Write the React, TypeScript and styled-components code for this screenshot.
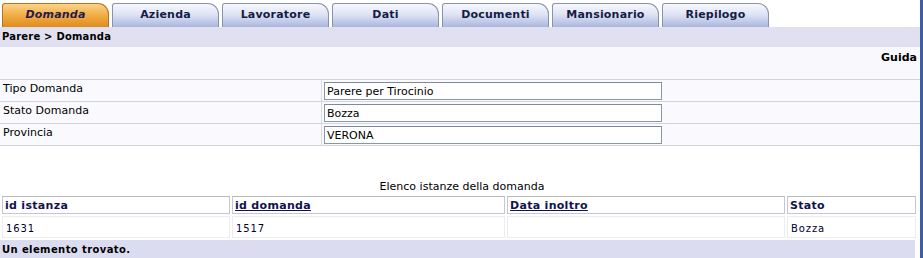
import React, { FunctionComponent } from 'react';
import styled, { createGlobalStyle } from 'styled-components';

const GlobalStyle = createGlobalStyle`
    html, body {
        margin: 0;
        padding: 0;
        background: #ffffff;
    }
    body {
        font-family: 'DejaVu Sans', Verdana, sans-serif;
        font-size: 11px;
        color: #000000;
    }
`;

const Frame = styled.div`
    display: flex;
    flex-direction: column;
    width: 920px;
    height: 258px;
    border-right: 3px solid #3d5f9e;
    background: #ffffff;
    overflow: hidden;
`;

const TabBar = styled.div`
    display: flex;
    flex-direction: row;
    align-items: flex-end;
    height: 27px;
    padding-left: 2px;
    gap: 3px;
`;

const Tab = styled.div<{ $active?: boolean }>`
    display: flex;
    align-items: center;
    justify-content: center;
    box-sizing: border-box;
    width: 107px;
    height: 24px;
    border: 1px solid ${(p) => (p.$active ? '#b07426' : '#8a93ae')};
    border-bottom: none;
    border-radius: 3px 11px 0 0;
    background: ${(p) =>
        p.$active
            ? 'linear-gradient(to bottom, #fbd48a 0%, #f2b04a 45%, #e08c1c 100%)'
            : 'linear-gradient(to bottom, #f6f8fd 0%, #dfe4f4 45%, #aab6de 100%)'};
    color: ${(p) => (p.$active ? '#241a4e' : '#141c46')};
    font-size: 11px;
    font-weight: bold;
    font-style: ${(p) => (p.$active ? 'italic' : 'normal')};
    letter-spacing: 0.2px;
    padding-bottom: 1px;
`;

const Breadcrumb = styled.div`
    height: 21px;
    display: flex;
    align-items: center;
    padding-left: 2px;
    background: #e0e0f1;
    font-weight: bold;
    font-size: 10px;
    letter-spacing: 0.2px;
    color: #000000;
`;

const HelpBand = styled.div`
    height: 32px;
    display: flex;
    justify-content: flex-end;
    align-items: flex-start;
    padding: 4px 3px 0 0;
    box-sizing: border-box;
    background: #f8f8fd;
    font-weight: bold;
    font-size: 11px;
`;

const FormRow = styled.div`
    display: grid;
    grid-template-columns: 322px 1fr;
    height: 22px;
    box-sizing: border-box;
    border-top: 1px solid #d3d3dc;
    background: #fafafe;

    &:last-child {
        height: 23px;
        border-bottom: 1px solid #d3d3dc;
    }
`;

const FormLabel = styled.div`
    padding: 2px 0 0 3px;
    border-right: 1px solid #dcdce4;
    font-size: 11px;
`;

const FormValue = styled.div`
    padding: 2px 0 0 2px;
`;

const FieldInput = styled.input`
    box-sizing: border-box;
    width: 338px;
    height: 18px;
    margin: 0;
    padding: 2px 2px 0 2px;
    border: 1px solid #8996a4;
    border-top-color: #7d8a99;
    background: #ffffff;
    font-family: 'DejaVu Sans', Verdana, sans-serif;
    font-size: 11px;
    color: #000000;
    outline: none;
`;

const Spacer = styled.div`
    height: 35px;
`;

const Caption = styled.div`
    text-align: center;
    font-size: 11px;
    height: 14px;
    line-height: 14px;
    padding-left: 4px;
`;

const ListTable = styled.table`
    width: 918px;
    border-collapse: separate;
    border-spacing: 2px;
    margin: 0;
    font-size: 11px;
`;

const HeadCell = styled.th<{ $width?: number }>`
    width: ${(p) => (p.$width ? `${p.$width}px` : 'auto')};
    height: 14px;
    padding: 1px 2px;
    text-align: left;
    border: 1px solid #c7c7d0;
    border-top-color: #b8b8c2;
    background: #ffffff;
    font-size: 11px;
    font-weight: bold;
    letter-spacing: 0.3px;
    color: #12124e;
`;

const SortLink = styled.a`
    color: #12124e;
    text-decoration: underline;
`;

const DataCell = styled.td`
    height: 18px;
    padding: 2px 3px 0 3px;
    border: 1px solid #ececf2;
    background: #ffffff;
    font-size: 10px;
    color: #000030;
    letter-spacing: 0.9px;
`;

const Footer = styled.div`
    width: 915px;
    height: 18px;
    display: flex;
    align-items: center;
    padding-left: 2px;
    box-sizing: border-box;
    background: #dcdcf0;
    font-weight: bold;
    font-size: 10px;
    letter-spacing: 0.4px;
`;

const tabs = ['Domanda', 'Azienda', 'Lavoratore', 'Dati', 'Documenti', 'Mansionario', 'Riepilogo'];

const fields = [
    { label: 'Tipo Domanda', value: 'Parere per Tirocinio' },
    { label: 'Stato Domanda', value: 'Bozza' },
    { label: 'Provincia', value: 'VERONA' },
];

const App: FunctionComponent = () => {
    return (
        <>
            <GlobalStyle />
            <Frame>
                <TabBar>
                    {tabs.map((t, i) => (
                        <Tab key={t} $active={i === 0}>
                            {t}
                        </Tab>
                    ))}
                </TabBar>
                <Breadcrumb>Parere &gt; Domanda</Breadcrumb>
                <HelpBand>Guida</HelpBand>
                <div>
                    {fields.map((f) => (
                        <FormRow key={f.label}>
                            <FormLabel>{f.label}</FormLabel>
                            <FormValue>
                                <FieldInput readOnly value={f.value} />
                            </FormValue>
                        </FormRow>
                    ))}
                </div>
                <Spacer />
                <Caption>Elenco istanze della domanda</Caption>
                <ListTable>
                    <thead>
                        <tr>
                            <HeadCell $width={222}>id istanza</HeadCell>
                            <HeadCell $width={267}>
                                <SortLink href="#">id domanda</SortLink>
                            </HeadCell>
                            <HeadCell $width={272}>
                                <SortLink href="#">Data inoltro</SortLink>
                            </HeadCell>
                            <HeadCell>Stato</HeadCell>
                        </tr>
                    </thead>
                    <tbody>
                        <tr>
                            <DataCell>1631</DataCell>
                            <DataCell>1517</DataCell>
                            <DataCell></DataCell>
                            <DataCell>Bozza</DataCell>
                        </tr>
                    </tbody>
                </ListTable>
                <Footer>Un elemento trovato.</Footer>
            </Frame>
        </>
    );
};

export default App;
